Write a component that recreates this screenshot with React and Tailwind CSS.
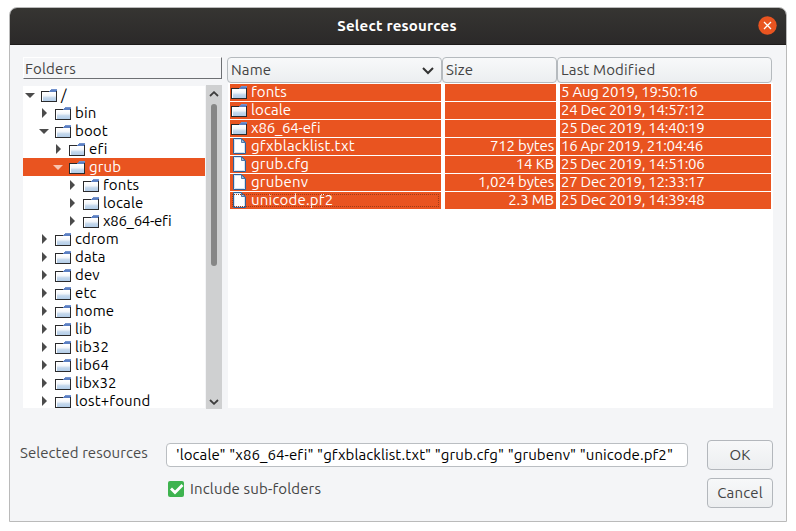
import React from "react";

const TREE = [
  ["/", 0, true],
  ["bin", 1],
  ["boot", 1, true],
  ["efi", 2],
  ["grub", 2, true],
  ["fonts", 3],
  ["locale", 3],
  ["x86_64-efi", 3],
  ["cdrom", 1],
  ["data", 1],
  ["dev", 1],
  ["etc", 1],
  ["home", 1],
  ["lib", 1],
  ["lib32", 1],
  ["lib64", 1],
  ["libx32", 1],
  ["lost+found", 1],
];

const INDENT = ["pl-[2px]", "pl-[16px]", "pl-[30px]", "pl-[44px]"];

const FILES = [
  ["fonts", "", "5 Aug 2019, 19:50:16", true],
  ["locale", "", "24 Dec 2019, 14:57:12", true],
  ["x86_64-efi", "", "25 Dec 2019, 14:40:19", true],
  ["gfxblacklist.txt", "712 bytes", "16 Apr 2019, 21:04:46"],
  ["grub.cfg", "14 KB", "25 Dec 2019, 14:51:06"],
  ["grubenv", "1,024 bytes", "27 Dec 2019, 12:33:17"],
  ["unicode.pf2", "2.3 MB", "25 Dec 2019, 14:39:48"],
];

function FolderIcon() {
  return (
    <svg width="16" height="14" viewBox="0 0 16 14" className="block shrink-0" shapeRendering="crispEdges">
      <defs>
        <linearGradient id="folderFill" x1="0" y1="0" x2="0" y2="1">
          <stop offset="0" stopColor="#ffffff" />
          <stop offset="0.35" stopColor="#f1f5fa" />
          <stop offset="0.6" stopColor="#c3d7ec" />
          <stop offset="1" stopColor="#b3cde8" />
        </linearGradient>
      </defs>
      <rect x="0" y="3" width="16" height="11" fill="#2a2a2c" />
      <rect x="1" y="4" width="14" height="9" fill="#fff" />
      <rect x="2" y="5" width="13" height="8" fill="url(#folderFill)" />
      <path d="M8 3h1V2h1V1h6v2h-1v1H8z" fill="#5c80c3" />
      <path d="M10 1h6v1h-6z" fill="#7493cd" />
    </svg>
  );
}

function FileIcon() {
  return (
    <svg width="13" height="16" viewBox="0 0 13 16" className="block shrink-0">
      <path d="M.5.5h8l4 4v11H.5z" fill="#fff" stroke="#2e6099" />
      <path d="M1.5 14V1.5H8M1.5 14.500h10V5" fill="none" stroke="#d5e3f1" />
      <path d="M8.500 1v3.500h3.500z" fill="#aac4df" stroke="#2e6099" strokeWidth=".8" />
    </svg>
  );
}

function Arrow({ open, selected }) {
  return (
    <svg width="10" height="10" viewBox="0 0 10 10" className={`block shrink-0 ${selected ? "text-[#f8c4b0]" : "text-[#4b4b4b]"}`}>
      <path d={open ? "M0 3h10L5 8z" : "M3 0v10l5-5z"} fill="currentColor" />
    </svg>
  );
}

function Chevron({ up }) {
  return (
    <svg width="10" height="6" viewBox="0 0 10 6" className="block">
      <path d={up ? "M1 5l4-3.800L9 5" : "M1 1l4 3.800L9 1"} fill="none" stroke="#3c3c3c" strokeWidth="1.800" />
    </svg>
  );
}

function TreeRow({ name, level, open }) {
  const selected = name === "grub";
  return (
    <div className={`flex h-[18px] shrink-0 items-center ${INDENT[level]} ${selected ? "bg-[#e95420] text-white" : "text-black"}`}>
      <Arrow open={open} selected={selected} />
      <span className="ml-[6px]"><FolderIcon /></span>
      <span className={`${level ? "ml-[4px]" : "ml-[4px]"} whitespace-nowrap ${name === "x86_64-efi" ? "tracking-[-0.3px]" : "tracking-[0.15px]"}`}>{name}</span>
    </div>
  );
}

function HeaderCell({ width, children }) {
  return (
    <div className={`flex h-[26px] items-center justify-between rounded-[4px] border border-[#b5babe] bg-gradient-to-b from-[#f8f9fa] to-[#eceef0] pl-[3px] pr-[7px] tracking-[0.15px] text-[#444] ${width}`}>
      {children}
    </div>
  );
}

const BUTTON = "flex h-[30px] w-[66px] items-center justify-center rounded-[4px] border border-[#b3b7bc] bg-gradient-to-b from-[#f7f8f9] to-[#eceef0] tracking-[0.15px] text-[#444]";

export default function App() {
  return (
    <div className="h-[531px] w-[796px] overflow-hidden bg-white pl-[9px] pt-[7px] font-['Ubuntu','Noto_Sans',sans-serif] text-[15px] leading-[18px] [font-variant-ligatures:none]">
      <div className="flex h-[515px] w-[778px] flex-col overflow-hidden rounded-t-[8px] border border-[#bababa] bg-[#f4f5f7]">
        <div className="flex h-[37px] shrink-0 items-center border-b border-[#1d1b1a] bg-gradient-to-b from-[#363532] to-[#2b2929] pl-[26px] pr-[9px]">
          <div className="grow text-center font-bold tracking-[0.2px] text-white">Select resources</div>
          <svg width="19" height="19" viewBox="0 0 19 19" className="-mt-px block">
            <circle cx="9.500" cy="9.500" r="9.200" fill="#e95420" />
            <path d="M6 6l7 7M13 6l-7 7" stroke="#fff" strokeWidth="1.300" />
          </svg>
        </div>

        <div className="flex h-[364px] shrink-0 pl-[13px] pt-[12px]">
          <div className="flex w-[199px] flex-col">
            <div className="h-[22px] border border-b-[#6d6f73] border-l-white border-r-[#6d6f73] border-t-white pl-[1px] pt-[2px] tracking-[0.15px] text-[#444]">Folders</div>
            <div className="mt-[6px] flex h-[324px]">
              <div className="mt-[1px] flex h-[322px] w-[182px] flex-col overflow-hidden bg-white">
                {TREE.map(([name, level, open]) => (
                  <TreeRow key={name} name={name} level={level} open={open} />
                ))}
              </div>
              <div className="ml-[1px] flex w-[16px] flex-col items-center justify-between bg-[#cfd0d1] pb-[4px] pt-[6px]">
                <Chevron up />
                <div className="mb-auto mt-[7px] h-[162px] w-[6px] rounded-[3px] bg-[#868686]" />
                <Chevron />
              </div>
            </div>
          </div>

          <div className="ml-[5px] flex w-[546px] flex-col">
            <div className="flex">
              <HeaderCell width="w-[215px]">
                <span>Name</span>
                <svg width="12" height="8" viewBox="0 0 12 8" className="mt-[2px] block">
                  <path d="M1 1l5 5 5-5" fill="none" stroke="#333" strokeWidth="2" />
                </svg>
              </HeaderCell>
              <HeaderCell width="w-[115px]">Size</HeaderCell>
              <HeaderCell width="w-[215px]">Last Modified</HeaderCell>
            </div>
            <div className="ml-[1px] flex h-[325px] flex-col gap-px bg-white px-[2px] pt-[1px] text-white">
              {FILES.map(([name, size, date, folder]) => (
                <div key={name} className="flex h-[17px] leading-[16px]">
                  <div className={`relative mr-[4px] flex w-[211px] items-start bg-[#e95420] ${folder ? "pl-[1px]" : "pl-[3px]"}`}>
                    {folder ? <span className="mt-[1px]"><FolderIcon /></span> : <FileIcon />}
                    <span className={`ml-[4px] ${name === "x86_64-efi" ? "tracking-[-0.2px]" : folder ? "tracking-[0.1px]" : "pl-px tracking-[0.2px]"}`}>{name}</span>
                    {name === "unicode.pf2" && (
                      <div className="absolute inset-x-[2px] bottom-[2px] top-[2px] border border-dotted border-[#a03c18]" />
                    )}
                  </div>
                  <div className="mr-[4px] flex w-[111px] items-start justify-end bg-[#e95420] pr-[2px] tracking-[-0.150px]">{size}</div>
                  <div className="flex w-[211px] items-start bg-[#e95420] pl-[1px] tracking-[-0.250px]">{date}</div>
                </div>
              ))}
            </div>
          </div>
        </div>

        <div className="flex pl-[10px] pt-[34px]">
          <div className="w-[146px] pt-[1px] tracking-[0.05px] text-[#4b4b4b]">Selected resources</div>
          <div className="w-[522px]">
            <div className="flex h-[24px] items-center rounded-[4px] border border-[#babec2] bg-white pl-[9px] text-black">
              <span className="whitespace-nowrap tracking-[0.085px]">'locale" "x86_64-efi" "gfxblacklist.txt" "grub.cfg" "grubenv" "unicode.pf2"</span>
            </div>
            <div className="mt-[13px] flex items-center pl-[2px] text-[#444]">
              <svg width="16" height="16" viewBox="0 0 16 16" className="block">
                <rect width="16" height="16" rx="2" fill="#3eb34f" />
                <path d="M3 7.500l4 4L14.500 4" fill="none" stroke="#fff" strokeWidth="2.800" />
              </svg>
              <span className="ml-[6px] tracking-[0.15px]">Include sub-folders</span>
            </div>
          </div>
          <div className="-mt-[3px] ml-[19px] flex flex-col gap-[8px]">
            <div className={BUTTON}>OK</div>
            <div className={BUTTON}>Cancel</div>
          </div>
        </div>
      </div>
    </div>
  );
}
